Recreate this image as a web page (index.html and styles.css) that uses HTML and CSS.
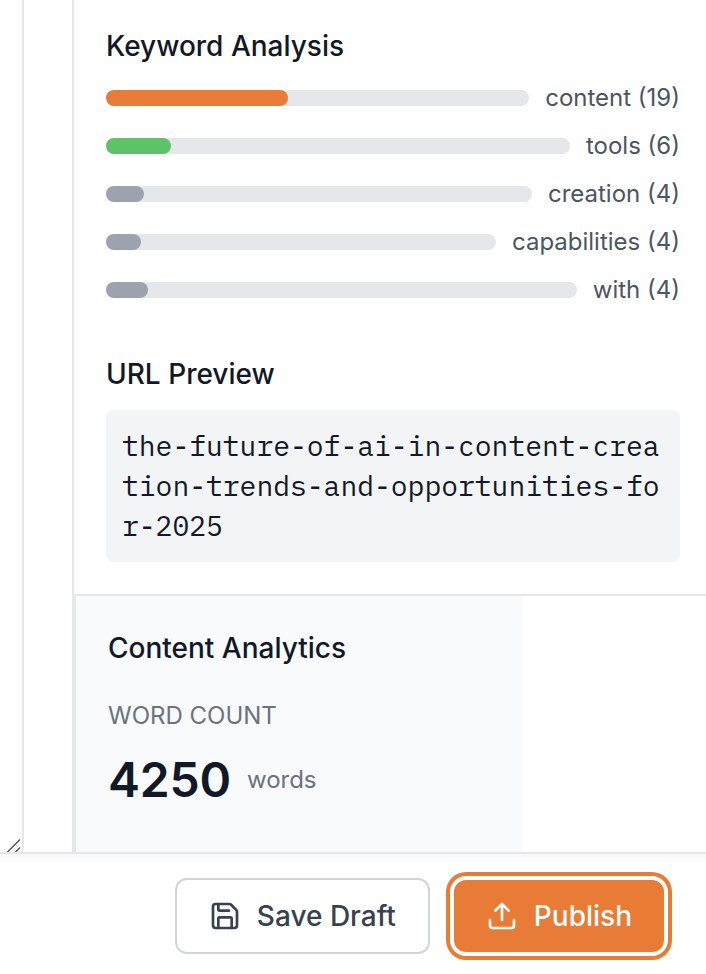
FILE: index.html
```
<!DOCTYPE html>
<html lang="en">
<head>
<meta charset="utf-8">
<title>Content Editor</title>
<link rel="stylesheet" href="styles.css">
</head>
<body>
<main class="workspace">
  <div class="editor">
    <svg class="resize-handle" width="16" height="16" viewBox="0 0 16 16"><path d="M2 14.5L15 1.5M10 14.5L15 9.5"/></svg>
  </div>
  <aside class="sidebar">
    <div class="seo">
      <section class="keywords">
        <h2 class="heading">Keyword Analysis</h2>
        <div class="keyword"><div class="track"><div class="fill fill-high" style="width:43%"></div></div><span class="label">content (19)</span></div>
        <div class="keyword"><div class="track"><div class="fill fill-medium" style="width:14%"></div></div><span class="label">tools (6)</span></div>
        <div class="keyword"><div class="track"><div class="fill" style="width:9%"></div></div><span class="label">creation (4)</span></div>
        <div class="keyword"><div class="track"><div class="fill" style="width:9%"></div></div><span class="label">capabilities (4)</span></div>
        <div class="keyword"><div class="track"><div class="fill" style="width:9%"></div></div><span class="label">with (4)</span></div>
      </section>
      <section class="url">
        <h2 class="heading">URL Preview</h2>
        <div class="slug">the-future-of-ai-in-content-creation-trends-and-opportunities-for-2025</div>
      </section>
    </div>
    <section class="analytics">
      <h2 class="heading">Content Analytics</h2>
      <div class="stat-name">WORD COUNT</div>
      <div class="stat"><span class="stat-value">4250</span><span class="stat-unit">words</span></div>
    </section>
  </aside>
</main>
<footer class="actions">
  <button class="button button-outline">
    <svg class="icon" viewBox="0 0 24 24"><path d="M15.2 3a2 2 0 0 1 1.4.6l3.8 3.8a2 2 0 0 1 .6 1.4V19a2 2 0 0 1-2 2H5a2 2 0 0 1-2-2V5a2 2 0 0 1 2-2z"/><path d="M17 21v-7a1 1 0 0 0-1-1H8a1 1 0 0 0-1 1v7M7 3v4a1 1 0 0 0 1 1h7"/></svg>
    <span>Save Draft</span>
  </button>
  <button class="button button-primary">
    <svg class="icon" viewBox="0 0 24 24"><path d="M21 15v4a2 2 0 0 1-2 2H5a2 2 0 0 1-2-2v-4M17 8l-5-5-5 5M12 3v12"/></svg>
    <span>Publish</span>
  </button>
</footer>
</body>
</html>
```
FILE: styles.css
```
* { box-sizing: border-box; }
body {
  margin: 0;
  height: 974px;
  display: flex;
  flex-direction: column;
  overflow: hidden;
  background: #fff;
  color: #111827;
  font: 28px/40px Inter, "Liberation Sans", sans-serif;
}
.workspace {
  height: 852px;
  flex: none;
  display: flex;
  gap: 48px;
  overflow: hidden;
}
.editor {
  width: 24px;
  height: 862px;
  flex: none;
  display: flex;
  justify-content: flex-end;
  align-items: flex-end;
  padding: 0 1px 6px 0;
  border-right: 2px solid #e5e7eb;
  border-bottom: 2px solid #e5e7eb;
  border-bottom-right-radius: 16px;
}
.resize-handle { fill: none; stroke: #555; stroke-width: 1.5; display: block; flex: none; }
.sidebar {
  flex: 1;
  min-width: 0;
  height: 852px;
  display: flex;
  flex-direction: column;
  border-left: 2px solid #e5e7eb;
}
.seo {
  flex: none;
  padding: 26px 26px 32px 32px;
  border-bottom: 2px solid #e5e7eb;
}
.heading { margin: 0; font-size: 28px; line-height: 40px; font-weight: 500; }
.keyword {
  display: flex;
  align-items: center;
  gap: 16px;
  margin-top: 16px;
  height: 32px;
}
.track { flex: 1; height: 16px; border-radius: 8px; background: #e5e7eb; }
.fill { height: 16px; border-radius: 8px; background: #9ca3af; }
.fill-high { background: #e87b35; }
.fill-medium { background: #5ec269; }
.label { font-size: 24px; line-height: 32px; color: #4b5563; }
.url { margin-top: 48px; }
.slug {
  margin-top: 16px;
  padding: 16px;
  border-radius: 8px;
  background: #f3f4f6;
  font-family: "IBM Plex Mono", "Liberation Mono", monospace;
  word-break: break-all;
}
.analytics {
  flex: 1;
  width: 448px;
  padding: 32px;
  border-left: 2px solid #e5e7eb;
  background: #f9fafc;
}
.stat-name { margin-top: 32px; font-size: 24px; line-height: 32px; color: #6b7280; }
.stat { display: flex; align-items: center; gap: 16px; margin-top: 16px; height: 64px; }
.stat-value { font-size: 48px; line-height: 64px; font-weight: 600; letter-spacing: -0.2px; }
.stat-unit { font-size: 24px; line-height: 32px; color: #6b7280; }
.actions {
  position: relative;
  flex: 1;
  display: flex;
  justify-content: flex-end;
  align-items: flex-start;
  gap: 24px;
  padding: 24px 42px 0 0;
  border-top: 2px solid #e5e7eb;
  background: linear-gradient(#f8f8f8, #fff 10px);
}
.button {
  display: flex;
  align-items: center;
  gap: 16px;
  padding: 16px 32px;
  border: 0;
  border-radius: 12px;
  font: 500 28px/40px Inter, "Liberation Sans", sans-serif;
}
.button-outline {
  padding: 16px 32px;
  border: 2px solid #d1d5db;
  background: #fff;
  color: #374151;
}
.button-primary {
  margin-top: 2px;
  background: #e87b35;
  color: #fff;
  box-shadow: 0 0 0 4px #fff, 0 0 0 8px #e87b35;
}
.icon {
  width: 32px;
  height: 32px;
  fill: none;
  stroke: currentColor;
  stroke-width: 2;
  stroke-linecap: round;
  stroke-linejoin: round;
}
```
